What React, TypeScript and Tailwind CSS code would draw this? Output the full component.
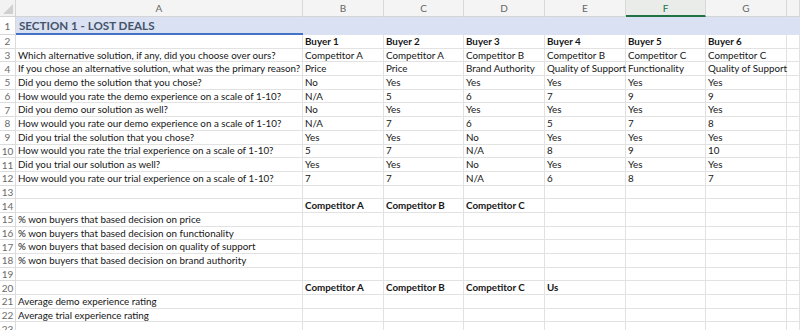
import React from "react";

const COLS = ["A", "B", "C", "D", "E", "F", "G", ""];
const WIDTHS = ["w-[287px]", "w-[81px]", "w-[80px]", "w-[81px]", "w-[81px]", "w-[80px]", "w-[81px]", "w-[13px]"];

type Row = { cells: string[]; bold?: boolean[] };

const rows: Row[] = [
  { cells: ["", "Buyer 1", "Buyer 2", "Buyer 3", "Buyer 4", "Buyer 5", "Buyer 6", ""], bold: [false, true, true, true, true, true, true, false] },
  { cells: ["Which alternative solution, if any, did you choose over ours?", "Competitor A", "Competitor A", "Competitor B", "Competitor B", "Competitor C", "Competitor C", ""] },
  { cells: ["If you chose an alternative solution, what was the primary reason?", "Price", "Price", "Brand Authority", "Quality of Support", "Functionality", "Quality of Support", ""] },
  { cells: ["Did you demo the solution that you chose?", "No", "Yes", "Yes", "Yes", "Yes", "Yes", ""] },
  { cells: ["How would you rate the demo experience on a scale of 1-10?", "N/A", "5", "6", "7", "9", "9", ""] },
  { cells: ["Did you demo our solution as well?", "No", "Yes", "Yes", "Yes", "Yes", "Yes", ""] },
  { cells: ["How would you rate our demo experience on a scale of 1-10?", "N/A", "7", "6", "5", "7", "8", ""] },
  { cells: ["Did you trial the solution that you chose?", "Yes", "Yes", "No", "Yes", "Yes", "Yes", ""] },
  { cells: ["How would you rate the trial experience on a scale of 1-10?", "5", "7", "N/A", "8", "9", "10", ""] },
  { cells: ["Did you trial our solution as well?", "Yes", "Yes", "No", "Yes", "Yes", "Yes", ""] },
  { cells: ["How would you rate our trial experience on a scale of 1-10?", "7", "7", "N/A", "6", "8", "7", ""] },
  { cells: ["", "", "", "", "", "", "", ""] },
  { cells: ["", "Competitor A", "Competitor B", "Competitor C", "", "", "", ""], bold: [false, true, true, true, false, false, false, false] },
  { cells: ["% won buyers that based decision on price", "", "", "", "", "", "", ""] },
  { cells: ["% won buyers that based decision on functionality", "", "", "", "", "", "", ""] },
  { cells: ["% won buyers that based decision on quality of support", "", "", "", "", "", "", ""] },
  { cells: ["% won buyers that based decision on brand authority", "", "", "", "", "", "", ""] },
  { cells: ["", "", "", "", "", "", "", ""] },
  { cells: ["", "Competitor A", "Competitor B", "Competitor C", "Us", "", "", ""], bold: [false, true, true, true, true, false, false, false] },
  { cells: ["Average demo experience rating", "", "", "", "", "", "", ""] },
  { cells: ["Average trial experience rating", "", "", "", "", "", "", ""] },
  { cells: ["", "", "", "", "", "", "", ""] },
];

function Corner() {
  return (
    <div className="w-[16px] h-[17px] shrink-0 bg-[#f2f2f2] border-r border-b border-[#d4d4d4] relative">
      <svg className="absolute right-[2px] bottom-[2px]" width="10" height="10" viewBox="0 0 10 10">
        <polygon points="10,0 10,10 0,10" fill="#d0d0d0" />
      </svg>
    </div>
  );
}

export default function App() {
  return (
    <div
      className="w-[800px] h-[330px] overflow-hidden bg-white text-[#161616] text-[9.8px] leading-none"
      style={{ fontFamily: "Lato, 'Open Sans', sans-serif" }}
    >
      {/* column header strip */}
      <div className="flex h-[17px]">
        <Corner />
        {COLS.map((c, i) => (
          <div
            key={i}
            className={`${WIDTHS[i]} shrink-0 h-[17px] flex items-center justify-center border-r border-[#d8d8d8] text-[10px] ${
              c === "F"
                ? "bg-[#e9ece9] text-[#217346] border-b-2 border-b-[#217346]"
                : "bg-[#f4f4f4] text-[#666666] border-b border-b-[#d4d4d4]"
            }`}
          >
            {c}
          </div>
        ))}
      </div>

      {/* row 1: section title */}
      <div className="flex h-[18px]">
        <div className="w-[16px] shrink-0 bg-white border-r border-b border-[#d8d8d8] flex items-center justify-center text-[#666666] text-[10px]">
          1
        </div>
        <div className="flex flex-1 bg-[#dae1f2]">
          <div className="w-[287px] shrink-0 border-b-2 border-[#4472c4] flex items-center pl-[3px] pt-[1px] font-bold text-[#44546a] text-[11.6px]">
            SECTION 1 - LOST DEALS
          </div>
          <div className="flex-1" />
        </div>
      </div>

      {rows.map((row, r) => (
        <div key={r} className="flex h-[13.7px]">
          <div className="w-[16px] shrink-0 bg-white border-r border-b border-[#dcdcdc] flex items-center justify-center text-[#6b6b6b] text-[10px]">
            {r + 2}
          </div>
          {row.cells.map((t, i) => (
            <div
              key={i}
              className={`${WIDTHS[i]} shrink-0 border-r border-b border-[#e2e2e2] flex items-center pl-[2px] pt-[1px] whitespace-nowrap overflow-visible ${
                row.bold && row.bold[i] ? "font-bold" : ""
              }`}
            >
              {t}
            </div>
          ))}
        </div>
      ))}
    </div>
  );
}
